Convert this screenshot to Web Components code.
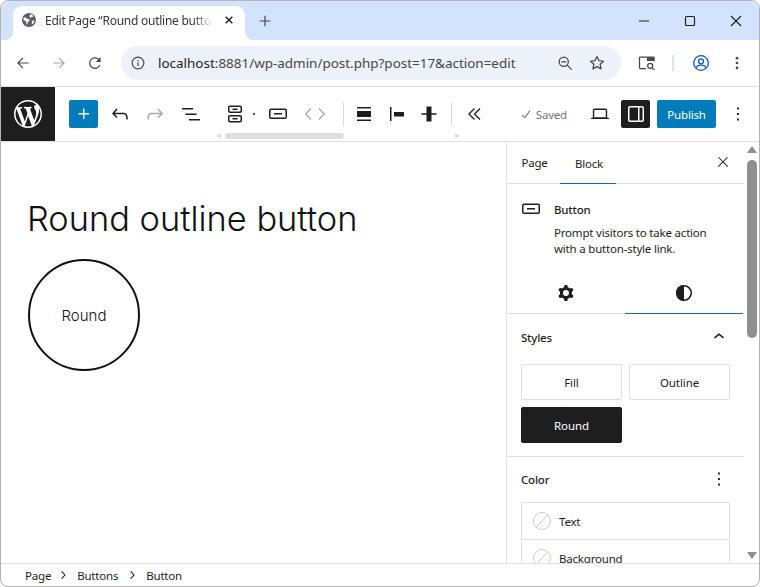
<!DOCTYPE html>
<html lang="en">
<head>
<meta charset="utf-8">
<title>Edit Page</title>
<style>
  html, body { margin: 0; height: 100%; background: #fff; }
  body { font-family: "Noto Sans", "Open Sans", sans-serif; color: #1e1e1e; }
</style>
</head>
<body>
<app-window>
  <browser-chrome></browser-chrome>
  <wp-topbar></wp-topbar>
  <wp-main>
    <wp-canvas slot="canvas"></wp-canvas>
    <wp-sidebar slot="sidebar"></wp-sidebar>
  </wp-main>
  <wp-statusbar></wp-statusbar>
</app-window>

<script>
const ICONS = {
  plus: '<path d="M11 12.5V17.5H12.5V12.5H17.5V11H12.5V6H11V11H6V12.5H11Z"/>',
  undo: '<path d="M18.3 11.7c-.6-.6-1.4-.9-2.3-.9H6.7l2.9-3.3-1.1-1-4.5 5L8.5 16l1-1-2.7-2.7H16c.5 0 .9.2 1.3.5 1 1 1 3.4 1 4.5v.3h1.5v-.2c0-1.5 0-4.3-1.5-5.7z"/>',
  redo: '<path d="M15.6 6.5l-1.1 1 2.9 3.3H8c-.9 0-1.7.3-2.3.9-1.4 1.5-1.4 4.2-1.4 5.6v.2h1.5v-.3c0-1.1 0-3.5 1-4.5.3-.3.7-.5 1.3-.5h9.2L14.5 15l1.1 1.1 4.6-4.6-4.6-5z"/>',
  list: '<path d="M3 6h11v1.5H3V6Zm3.5 5.5h11V13h-11v-1.5ZM21 17H10v1.5h11V17Z"/>',
  buttons: '<path fill-rule="evenodd" d="M14.5 17.5H9.5V16H14.5V17.5Z M14.5 8H9.5V6.5H14.5V8Z M7 3.5H17C18.1 3.5 19 4.4 19 5.5V9C19 10.1 18.1 11 17 11H7C5.9 11 5 10.1 5 9V5.5C5 4.4 5.9 3.5 7 3.5ZM17 5H7C6.72 5 6.5 5.22 6.5 5.5V9C6.5 9.28 6.72 9.5 7 9.5H17C17.28 9.5 17.5 9.28 17.5 9V5.5C17.5 5.22 17.28 5 17 5Z M7 13H17C18.1 13 19 13.9 19 15V18.5C19 19.6 18.1 20.5 17 20.5H7C5.9 20.5 5 19.6 5 18.5V15C5 13.9 5.9 13 7 13ZM17 14.5H7C6.72 14.5 6.5 14.72 6.5 15V18.5C6.5 18.78 6.72 19 7 19H17C17.28 19 17.5 18.78 17.5 18.5V15C17.5 14.72 17.28 14.5 17 14.5Z"/>',
  button: '<path fill-rule="evenodd" d="M8 12.5h8V11H8v1.5Z M19 6.5H5a2 2 0 0 0-2 2V15a2 2 0 0 0 2 2h14a2 2 0 0 0 2-2V8.5a2 2 0 0 0-2-2ZM5 8h14a.5.5 0 0 1 .5.5V15a.5.5 0 0 1-.5.5H5a.5.5 0 0 1-.5-.5V8.5A.5.5 0 0 1 5 8Z"/>',
  movers: '<path fill="none" stroke="currentColor" stroke-width="1.3" d="M8 6.5 2.8 12 8 17.5M16 6.5l5.2 5.5L16 17.5"/>',
  alignWide: '<path d="M5 5h14v1.5H5zM5 9h14v6H5zM5 17.5h14V19H5z"/>',
  alignStart: '<path d="M5 5h1.5v14H5zM9 10h10v4.5H9z"/>',
  alignCenter: '<path d="M4.5 11.2h15v1.5h-15zM9.5 4.5h5v15h-5z"/>',
  collapse: '<path fill="none" stroke="currentColor" stroke-width="1.3" d="M12.5 6.5 7 12l5.5 5.5M18 6.5 12.5 12l5.5 5.5"/>',
  check: '<path d="M16.7 7.1l-6.3 8.5-3.3-2.5-.9 1.2 4.5 3.4L17.9 8z"/>',
  laptop: '<path d="M20.5 16h-.7V8c0-1.1-.9-2-2-2H6.2c-1.1 0-2 .9-2 2v8h-.7c-.8 0-1.5.7-1.5 1.5h20c0-.8-.7-1.5-1.5-1.5zM5.700 8c0-.3.2-.5.5-.5h11.6c.3 0 .5.2.5.5v7.600H5.7V8z"/>',
  sidebar: '<path d="M18 4H6c-1.1 0-2 .9-2 2v12c0 1.1.9 2 2 2h12c1.1 0 2-.9 2-2V6c0-1.1-.9-2-2-2zm-4 14.5H6c-.3 0-.5-.2-.5-.5V6c0-.3.2-.5.5-.5h8v13zm4.5-.5c0 .3-.2.5-.5.5h-2.5v-13H18c.3 0 .5.2.5.5v12z"/>',
  more: '<path d="M13 19h-2v-2h2v2zm0-6h-2v-2h2v2zm0-6h-2V5h2v2z"/>',
  close: '<path d="M13 11.8l6.1-6.3-1-1-6.1 6.2-6.1-6.2-1 1 6.1 6.3-6.5 6.7 1 1 6.5-6.6 6.5 6.6 1-1z"/>',
  chevronUp: '<path d="M6.5 12.4L12 8l5.5 4.4-.9 1.2L12 10l-4.5 3.6-1-1.2z"/>',
  chevronRight: '<path d="M10.6 6 9.4 7l4.6 5-4.6 5 1.2 1 5.4-6z"/>',
  cog: '<path fill-rule="evenodd" d="M10.289 4.836A1 1 0 0 1 11.275 4h1.306a1 1 0 0 1 .987.836l.244 1.466c.787.26 1.503.679 2.108 1.218l1.393-.522a1 1 0 0 1 1.216.437l.653 1.13a1 1 0 0 1-.23 1.273l-1.148.944a6.025 6.025 0 0 1 0 2.435l1.149.946a1 1 0 0 1 .23 1.272l-.653 1.13a1 1 0 0 1-1.216.437l-1.394-.522c-.605.54-1.32.958-2.108 1.218l-.244 1.466a1 1 0 0 1-.987.836h-1.306a1 1 0 0 1-.986-.836l-.244-1.466a5.995 5.995 0 0 1-2.108-1.218l-1.394.522a1 1 0 0 1-1.217-.436l-.653-1.131a1 1 0 0 1 .23-1.272l1.149-.946a6.026 6.026 0 0 1 0-2.435l-1.148-.944a1 1 0 0 1-.23-1.272l.653-1.131a1 1 0 0 1 1.217-.437l1.393.522a5.994 5.994 0 0 1 2.108-1.218l.244-1.466ZM14.929 12a3 3 0 1 1-6 0 3 3 0 0 1 6 0Z"/>',
  contrast: '<circle cx="12" cy="12" r="7.25" fill="none" stroke="currentColor" stroke-width="1.5"/><path d="M12 4a8 8 0 0 0 0 16z"/>',
  wordpress: '<path transform="scale(1.2)" d="M20 10c0-5.51-4.49-10-10-10C4.48 0 0 4.49 0 10c0 5.52 4.48 10 10 10 5.51 0 10-4.48 10-10zM7.78 15.37L4.37 6.22c.55-.02 1.17-.08 1.17-.08.5-.06.44-1.13-.06-1.11 0 0-1.45.11-2.37.11-.18 0-.37 0-.58-.01C4.12 2.69 6.87 1.11 10 1.11c2.33 0 4.45.87 6.05 2.34-.68-.11-1.65.39-1.65 1.58 0 .74.45 1.36.9 2.1.35.61.55 1.36.55 2.46 0 1.49-1.4 5-1.4 5l-3.03-8.37c.54-.02.82-.17.82-.17.5-.05.44-1.25-.06-1.22 0 0-1.44.12-2.38.12-.87 0-2.33-.12-2.33-.12-.5-.03-.56 1.2-.06 1.22l.92.08 1.26 3.41zM17.41 10c.24-.64.74-1.87.43-4.25.7 1.29 1.05 2.71 1.05 4.25 0 3.29-1.73 6.24-4.4 7.78.97-2.59 1.94-5.2 2.92-7.78zM6.1 18.09C3.12 16.65 1.11 13.53 1.11 10c0-1.3.23-2.48.72-3.59C3.25 10.3 4.67 14.2 6.1 18.09zm4.03-6.63l2.58 6.98c-.86.29-1.76.45-2.71.45-.79 0-1.57-.11-2.29-.33.81-2.38 1.62-4.74 2.42-7.1z"/>',
  // browser glyphs
  globe: '<circle cx="12" cy="12" r="10.5" fill="currentColor"/><path fill="#fff" d="M4 8.5c2-.5 4 .5 5.5 1.500s3.500.5 3.500 2-2 1.500-2.500 3-.5 3-1.500 4c-1-1-.5-3.500-1.500-4.500S3.500 12 3.500 10.500zM14 3.500c1.500 0 4 1.200 5 2.800-1 1-3 .7-3.500 1.700s-2 .5-2.500-.5.5-3 1-4zM17 13c1 0 3-.5 3.500 0-.5 2.500-2 4.500-4 5.500-.5-1.500-.5-4.500.5-5.500z"/>',
  tabClose: '<path fill="none" stroke="currentColor" stroke-width="2.2" d="M7 7l10 10M17 7 7 17"/>',
  newTab: '<path fill="none" stroke="currentColor" stroke-width="1.8" d="M12 4v16M4 12h16"/>',
  minimize: '<path fill="none" stroke="currentColor" stroke-width="1.2" d="M7 12h10"/>',
  maximize: '<rect x="7.5" y="7.5" width="9" height="9" rx="1" fill="none" stroke="currentColor" stroke-width="1.2"/>',
  winClose: '<path fill="none" stroke="currentColor" stroke-width="1.2" d="M7 7l10 10M17 7 7 17"/>',
  back: '<path fill="none" stroke="currentColor" stroke-width="1.6" d="M19.5 12H5.5M12 5.2 5.2 12l6.8 6.8"/>',
  forward: '<path fill="none" stroke="currentColor" stroke-width="1.6" d="M4.5 12h14M12 5.2l6.8 6.8-6.8 6.8"/>',
  reload: '<path fill="none" stroke="currentColor" stroke-width="1.7" d="M18.5 14.5a7 7 0 1 1-.6-6"/><path d="M19.5 4v6.5H13z"/>',
  info: '<circle cx="12" cy="12" r="7.8" fill="none" stroke="currentColor" stroke-width="1.6"/><path d="M11.2 11h1.6v5h-1.6zM11.2 8h1.6v1.6h-1.6z"/>',
  zoomOut: '<circle cx="10.5" cy="10.5" r="5.5" fill="none" stroke="currentColor" stroke-width="1.5"/><path fill="none" stroke="currentColor" stroke-width="1.5" d="M7.5 10.5h6M14.6 14.6l5.4 5.4"/>',
  star: '<path fill="none" stroke="currentColor" stroke-width="1.5" stroke-linejoin="round" d="M12 4.2l2.4 5 5.4.7-4 3.700 1.100 5.400-4.900-2.700L7.100 19l1.100-5.400-4-3.700 5.400-.7z"/>',
  tabSearch: '<path fill="none" stroke="currentColor" stroke-width="1.5" d="M11 18.700H4a1 1 0 0 1-1-1V6a1 1 0 0 1 1-1h15.500a1 1 0 0 1 1 1v4"/><path d="M12 5h8.500v4.500H12z"/><circle cx="15.800" cy="15.300" r="3" fill="none" stroke="currentColor" stroke-width="1.5"/><path fill="none" stroke="currentColor" stroke-width="1.5" d="M18 17.500l3 3"/>',
  profile: '<circle cx="12" cy="12" r="7.3" fill="none" stroke="currentColor" stroke-width="1.3"/><circle cx="12" cy="10.3" r="2.5" fill="none" stroke="currentColor" stroke-width="1.3"/><path fill="none" stroke="currentColor" stroke-width="1.3" d="M6.8 16.800c1-1.800 3-2.600 5.200-2.600s4.200.8 5.200 2.600"/>',
  dots: '<circle cx="12" cy="5.5" r="1.8"/><circle cx="12" cy="12" r="1.8"/><circle cx="12" cy="18.5" r="1.8"/>'
};

class WpIcon extends HTMLElement {
  connectedCallback() {
    const size = this.getAttribute('size') || 24;
    this.attachShadow({ mode: 'open' }).innerHTML = `
      <style>
        :host { display: block; flex: none; width: ${size}px; height: ${size}px; line-height: 0; }
        svg { width: 100%; height: 100%; fill: currentColor; display: block; }
      </style>
      <svg viewBox="0 0 24 24" aria-hidden="true">${ICONS[this.getAttribute('name')] || ''}</svg>`;
  }
}

const windowTpl = document.createElement('template');
windowTpl.innerHTML = `
  <style>
    :host {
      display: flex;
      flex-direction: column;
      box-sizing: border-box;
      width: 760px;
      height: 587px;
      border: 1px solid #b4b4b4;
      border-radius: 8px;
      overflow: hidden;
      background: #fff;
    }
  </style>
  <slot></slot>
`;
class AppWindow extends HTMLElement {
  constructor() {
    super();
    this.attachShadow({ mode: 'open' }).appendChild(windowTpl.content.cloneNode(true));
  }
}

const chromeTpl = document.createElement('template');
chromeTpl.innerHTML = `
  <style>
    :host { display: block; flex: none; font-family: "Noto Sans", sans-serif; color: #1f1f1f; }
    .strip { height: 39px; background: #d3e3fd; display: flex; align-items: flex-end; padding-left: 12px; }
    .tab {
      position: relative;
      box-sizing: border-box;
      width: 232px;
      height: 34px;
      background: #fff;
      border-radius: 9px 9px 0 0;
      display: flex;
      align-items: center;
      padding: 0 8px 6px;
    }
    .tab::before, .tab::after {
      content: "";
      position: absolute;
      bottom: 0;
      width: 9px;
      height: 9px;
    }
    .tab::before { left: -9px; background: radial-gradient(circle at 0 0, transparent 9px, #fff 9.5px); }
    .tab::after { right: -9px; background: radial-gradient(circle at 100% 0, transparent 9px, #fff 9.5px); }
    .tab wp-icon { color: #5b5e62; }
    .title {
      margin-left: 8px;
      width: 168px;
      font-size: 12px;
      letter-spacing: -.25px;
      white-space: nowrap;
      overflow: hidden;
      color: #33363a;
      -webkit-mask-image: linear-gradient(90deg, #000 88%, transparent);
      mask-image: linear-gradient(90deg, #000 88%, transparent);
    }
    .tab .tab-close { margin-left: 8px; color: #1f1f1f; }
    .new-tab { margin: 0 0 11px 12px; color: #474747; }
    .win { margin: 0 0 7px auto; display: flex; color: #1f1f1f; padding-right: 11px; }
    .win wp-icon + wp-icon { margin-left: 22px; }
    .bar {
      box-sizing: border-box;
      height: 47px;
      border-bottom: 1px solid #dfdfdf;
      display: flex;
      align-items: center;
      color: #474747;
    }
    .nav { margin-left: 13px; }
    .nav-next { margin-left: 18px; color: #a9a9a9; }
    .nav-reload { margin-left: 18px; }
    .omni {
      box-sizing: border-box;
      width: 500px;
      height: 34px;
      margin-left: 17px;
      border-radius: 17px;
      background: #edf2fa;
      display: flex;
      align-items: center;
      padding: 0 14px 0 8px;
    }
    .url { margin-left: 11px; font-size: 13.45px; color: #474747; white-space: nowrap; }
    .url b { font-weight: 400; color: #1f1f1f; }
    .omni .zoom { margin-left: auto; }
    .omni .star { margin-left: 12px; }
    .tabsearch { margin-left: 16px; }
    .sep { width: 2px; height: 16px; background: #d3e3fd; margin-left: 15px; }
    .profile { margin-left: 15px; color: #0b57d0; }
    .menu { margin-left: 15px; }
  </style>
  <div class="strip">
    <div class="tab">
      <wp-icon name="globe" size="16"></wp-icon>
      <span class="title">Edit Page “Round outline button” ‹ WordPress</span>
      <wp-icon class="tab-close" name="tabClose" size="16"></wp-icon>
    </div>
    <wp-icon class="new-tab" name="newTab" size="16"></wp-icon>
    <div class="win">
      <wp-icon name="minimize"></wp-icon>
      <wp-icon name="maximize"></wp-icon>
      <wp-icon name="winClose"></wp-icon>
    </div>
  </div>
  <div class="bar">
    <wp-icon class="nav" name="back" size="18"></wp-icon>
    <wp-icon class="nav-next" name="forward" size="18"></wp-icon>
    <wp-icon class="nav-reload" name="reload" size="18"></wp-icon>
    <div class="omni">
      <wp-icon name="info" size="18"></wp-icon>
      <span class="url"><b>localhost</b>:8881/wp-admin/post.php?post=17&amp;action=edit</span>
      <wp-icon class="zoom" name="zoomOut" size="20"></wp-icon>
      <wp-icon class="star" name="star" size="20"></wp-icon>
    </div>
    <wp-icon class="tabsearch" name="tabSearch" size="20"></wp-icon>
    <div class="sep"></div>
    <wp-icon class="profile" name="profile" size="24"></wp-icon>
    <wp-icon class="menu" name="dots" size="18"></wp-icon>
  </div>
`;
class BrowserChrome extends HTMLElement {
  constructor() {
    super();
    this.attachShadow({ mode: 'open' }).appendChild(chromeTpl.content.cloneNode(true));
  }
}

const topbarTpl = document.createElement('template');
topbarTpl.innerHTML = `
  <style>
    :host {
      display: flex;
      flex: none;
      position: relative;
      box-sizing: border-box;
      height: 55px;
      border-bottom: 1px solid #e0e0e0;
      align-items: center;
      color: #1e1e1e;
      font-family: "Noto Sans", sans-serif;
    }
    .logo {
      width: 54px;
      height: 54px;
      background: #1e1e1e;
      color: #fff;
      display: flex;
      align-items: center;
      justify-content: center;
      flex: none;
    }
    .add {
      width: 29px;
      height: 28px;
      margin-left: 14px;
      background: #007cba;
      color: #fff;
      border-radius: 2px;
      display: flex;
      align-items: center;
      justify-content: center;
      flex: none;
    }
    .off { color: #a8a8a8; }
    .dot { width: 2px; height: 2px; border-radius: 50%; background: #1e1e1e; margin-left: 6px; flex: none; }
    .divider { width: 1px; height: 24px; background: #ddd; flex: none; }
    .saved {
      margin-left: auto;
      display: flex;
      align-items: center;
      color: #757575;
      font-size: 11.5px;
      letter-spacing: -.2px;
    }
    .saved wp-icon { margin-right: 1px; }
    .toggle {
      width: 29px;
      height: 28px;
      margin-left: 10px;
      border-radius: 2px;
      background: #1e1e1e;
      color: #fff;
      display: flex;
      align-items: center;
      justify-content: center;
      flex: none;
    }
    .publish {
      width: 59px;
      height: 28px;
      margin-left: 7px;
      border-radius: 2px;
      background: #007cba;
      color: #fff;
      font-size: 11.5px;
      letter-spacing: -.2px;
      display: flex;
      align-items: center;
      justify-content: center;
      flex: none;
    }
    .scroll {
      position: absolute;
      left: 215px;
      bottom: 2px;
      display: flex;
      align-items: center;
      width: 244px;
      height: 6px;
    }
    .arrow { width: 0; height: 0; border-top: 3px solid transparent; border-bottom: 3px solid transparent; flex: none; }
    .arrow.l { border-right: 5px solid #e0e0e0; }
    .arrow.r { border-left: 5px solid #e0e0e0; margin-left: auto; }
    .thumb { width: 119px; height: 6px; margin-left: 4px; border-radius: 3px; background: #dedede; }
  </style>
  <div class="logo"><wp-icon name="wordpress" size="28"></wp-icon></div>
  <div class="add"><wp-icon name="plus" size="22"></wp-icon></div>
  <wp-icon name="undo" style="margin-left:10px"></wp-icon>
  <wp-icon class="off" name="redo" style="margin-left:11px"></wp-icon>
  <wp-icon name="list" style="margin-left:12px"></wp-icon>
  <wp-icon name="buttons" style="margin-left:20px"></wp-icon>
  <div class="dot"></div>
  <wp-icon name="button" style="margin-left:11px"></wp-icon>
  <wp-icon class="off" name="movers" style="margin-left:13px"></wp-icon>
  <div class="divider" style="margin-left:16px"></div>
  <wp-icon name="alignWide" style="margin-left:8px"></wp-icon>
  <wp-icon name="alignStart" style="margin-left:9px"></wp-icon>
  <wp-icon name="alignCenter" style="margin-left:8px"></wp-icon>
  <div class="divider" style="margin-left:10px"></div>
  <wp-icon name="collapse" style="margin-left:10px"></wp-icon>
  <div class="saved"><wp-icon name="check" size="18"></wp-icon><span>Saved</span></div>
  <wp-icon name="laptop" size="22" style="margin-left:22px"></wp-icon>
  <div class="toggle"><wp-icon name="sidebar"></wp-icon></div>
  <div class="publish">Publish</div>
  <wp-icon name="more" size="22" style="margin:0 10px 0 11px"></wp-icon>
  <div class="scroll"><i class="arrow l"></i><div class="thumb"></div><i class="arrow r"></i></div>
`;
class WpTopbar extends HTMLElement {
  constructor() {
    super();
    this.attachShadow({ mode: 'open' }).appendChild(topbarTpl.content.cloneNode(true));
  }
}

class WpMain extends HTMLElement {
  constructor() {
    super();
    this.attachShadow({ mode: 'open' }).innerHTML = `
      <style>
        :host { display: flex; flex: 1; min-height: 0; }
      </style>
      <slot name="canvas"></slot>
      <slot name="sidebar"></slot>`;
  }
}

const canvasTpl = document.createElement('template');
canvasTpl.innerHTML = `
  <style>
    :host { display: block; flex: 1; min-width: 0; padding: 58px 0 0 27px; box-sizing: border-box; color: #111; font-family: Inter, sans-serif; }
    h1 { margin: 0 0 0 -1px; font-size: 34.4px; line-height: 38px; font-weight: 300; white-space: nowrap; }
    .round {
      box-sizing: border-box;
      width: 112px;
      height: 112px;
      margin-top: 21px;
      border: 2px solid #111;
      border-radius: 50%;
      display: flex;
      align-items: center;
      justify-content: center;
      font-size: 15px;
      font-weight: 300;
    }
  </style>
  <h1>Round outline button</h1>
  <div class="round">Round</div>
`;
class WpCanvas extends HTMLElement {
  constructor() {
    super();
    this.attachShadow({ mode: 'open' }).appendChild(canvasTpl.content.cloneNode(true));
  }
}

class WpPanel extends HTMLElement {
  constructor() {
    super();
    const icon = this.getAttribute('icon');
    this.attachShadow({ mode: 'open' }).innerHTML = `
      <style>
        :host { display: block; box-sizing: border-box; padding: 0 14px; border-bottom: 1px solid #e0e0e0; }
        header { height: 46px; display: flex; align-items: center; justify-content: space-between; }
        h2 { margin: 0; font-size: 11.5px; letter-spacing: -.2px; font-weight: 500; color: #1e1e1e; }
      </style>
      <header><h2>${this.getAttribute('heading')}</h2><wp-icon name="${icon}" size="22"></wp-icon></header>
      <slot></slot>`;
  }
}

class StyleButton extends HTMLElement {
  constructor() {
    super();
    this.attachShadow({ mode: 'open' }).innerHTML = `
      <style>
        :host {
          display: flex;
          box-sizing: border-box;
          height: 36px;
          align-items: center;
          justify-content: center;
          border: 1px solid #e0e0e0;
          border-radius: 2px;
          font-size: 11.5px;
          letter-spacing: -.1px;
          color: #1e1e1e;
        }
        :host([active]) { background: #1e1e1e; border-color: #1e1e1e; color: #fff; }
      </style>
      <slot></slot>`;
  }
}

class ColorRow extends HTMLElement {
  constructor() {
    super();
    this.attachShadow({ mode: 'open' }).innerHTML = `
      <style>
        :host { display: flex; box-sizing: border-box; height: 36px; align-items: center; padding-left: 11px; font-size: 11.5px; letter-spacing: -.2px; color: #1e1e1e; }
        :host(:not(:first-child)) { height: 37px; border-top: 1px solid #e0e0e0; }
        svg { width: 18px; height: 18px; margin-right: 8px; flex: none; }
      </style>
      <svg viewBox="0 0 18 18" aria-hidden="true"><circle cx="9" cy="9" r="8.5" fill="#fff" stroke="#ccc"/><path d="M3.5 15 14.5 3" stroke="#ccc" fill="none"/></svg>
      <slot></slot>`;
  }
}

const sidebarTpl = document.createElement('template');
sidebarTpl.innerHTML = `
  <style>
    :host { display: flex; flex: none; width: 253px; font-family: "Noto Sans", sans-serif; font-size: 11.5px; letter-spacing: -.2px; color: #1e1e1e; }
    .panel { box-sizing: border-box; width: 238px; border-left: 1px solid #e0e0e0; overflow: hidden; }
    .tabs { box-sizing: border-box; height: 42px; border-bottom: 1px solid #e0e0e0; display: flex; align-items: center; position: relative; }
    .tab { height: 41px; box-sizing: border-box; display: flex; align-items: center; justify-content: center; }
    .tab.page { width: 53px; padding-left: 2px; }
    .tab.on { width: 56px; border-bottom: 1px solid #0f6ea8; height: 42px; padding: 1px 0 0 2px; margin-bottom: -1px; }
    .tabs wp-icon { margin-left: auto; margin-right: 13px; margin-top: -2px; }
    .card { display: flex; padding: 13px 12px 0 12px; height: 71px; }
    .card h3 { margin: 4px 0 6px; font-size: 11.5px; line-height: 18px; font-weight: 500; }
    .card p { margin: 0; line-height: 16px; }
    .card .text { margin-left: 11px; }
    .subtabs { display: flex; box-sizing: border-box; height: 46px; border-bottom: 1px solid #e0e0e0; }
    .subtabs div { display: flex; align-items: center; justify-content: center; height: 46px; padding-top: 4px; box-sizing: border-box; }
    .subtabs .a { width: 118px; }
    .subtabs .b { width: 118px; border-bottom: 1px solid #0f6ea8; }
    .choices { display: grid; grid-template-columns: 101px 101px; gap: 7px; padding-bottom: 13px; margin-top: 4px; }
    .colors { border: 1px solid #e0e0e0; border-radius: 2px; width: 209px; box-sizing: border-box; }
    wp-panel.color { border-bottom: 0; margin-top: -1px; }
    .rail { box-sizing: border-box; width: 15px; display: flex; flex-direction: column; align-items: center; background: #fff; }
    .up, .down { width: 0; height: 0; border-left: 5px solid transparent; border-right: 5px solid transparent; flex: none; }
    .up { margin-top: 4px; border-bottom: 7px solid #8f8f8f; }
    .down { margin-top: auto; margin-bottom: 4px; border-top: 7px solid #8f8f8f; }
    .grip { width: 10px; height: 178px; margin-top: 7px; border-radius: 5px; background: #8f8f8f; }
  </style>
  <div class="panel">
    <div class="tabs">
      <div class="tab page">Page</div>
      <div class="tab on">Block</div>
      <wp-icon name="close" size="16"></wp-icon>
    </div>
    <div class="card">
      <wp-icon name="button"></wp-icon>
      <div class="text">
        <h3>Button</h3>
        <p>Prompt visitors to take action<br>with a button-style link.</p>
      </div>
    </div>
    <div class="subtabs">
      <div class="a"><wp-icon name="cog"></wp-icon></div>
      <div class="b"><wp-icon name="contrast"></wp-icon></div>
    </div>
    <wp-panel heading="Styles" icon="chevronUp">
      <div class="choices">
        <style-button>Fill</style-button>
        <style-button>Outline</style-button>
        <style-button active>Round</style-button>
      </div>
    </wp-panel>
    <wp-panel class="color" heading="Color" icon="more">
      <div class="colors">
        <color-row>Text</color-row>
        <color-row>Background</color-row>
      </div>
    </wp-panel>
  </div>
  <div class="rail"><i class="up"></i><div class="grip"></div><i class="down"></i></div>
`;
class WpSidebar extends HTMLElement {
  constructor() {
    super();
    this.attachShadow({ mode: 'open' }).appendChild(sidebarTpl.content.cloneNode(true));
  }
}

const statusTpl = document.createElement('template');
statusTpl.innerHTML = `
  <style>
    :host {
      display: flex;
      flex: none;
      box-sizing: border-box;
      height: 23px;
      border-top: 1px solid #e0e0e0;
      align-items: center;
      padding-left: 24px;
      font-family: "Noto Sans", sans-serif;
      font-size: 11.5px;
      letter-spacing: -.2px;
      color: #1e1e1e;
    }
    wp-icon { margin: 0 6px; }
  </style>
  <span>Page</span><wp-icon name="chevronRight" size="16" style="margin-left:4px"></wp-icon>
  <span>Buttons</span><wp-icon name="chevronRight" size="16"></wp-icon>
  <span>Button</span>
`;
class WpStatusbar extends HTMLElement {
  constructor() {
    super();
    this.attachShadow({ mode: 'open' }).appendChild(statusTpl.content.cloneNode(true));
  }
}

customElements.define('wp-icon', WpIcon);
customElements.define('app-window', AppWindow);
customElements.define('browser-chrome', BrowserChrome);
customElements.define('wp-topbar', WpTopbar);
customElements.define('wp-main', WpMain);
customElements.define('wp-canvas', WpCanvas);
customElements.define('wp-panel', WpPanel);
customElements.define('style-button', StyleButton);
customElements.define('color-row', ColorRow);
customElements.define('wp-sidebar', WpSidebar);
customElements.define('wp-statusbar', WpStatusbar);
</script>
</body>
</html>
